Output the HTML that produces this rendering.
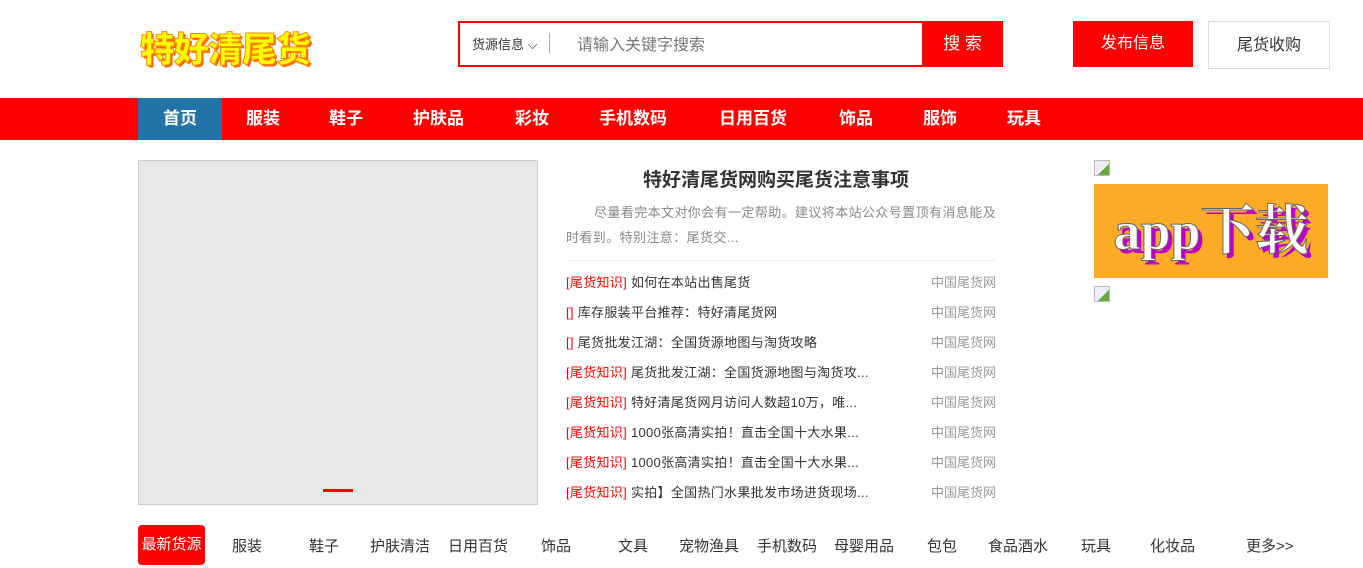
<!DOCTYPE html>
<html><head><meta charset="utf-8"><style>
*{margin:0;padding:0;box-sizing:border-box}
body{width:1363px;height:568px;overflow:hidden;background:#fff;font-family:"Liberation Sans","Noto Sans CJK SC",sans-serif;font-size:14px;color:#333;position:relative}
.a{position:absolute}
.logo{left:140px;top:22px;font-size:35px;font-weight:900;color:#ff0;-webkit-text-stroke:1px #f80;text-shadow:2px 2px 0 #f60;letter-spacing:-1px}
.search{left:458px;top:21px;width:545px;height:46px;border:2px solid #f00}
.nav{left:0;top:98px;width:1363px;height:42px;background:#f00}
.nav span{position:absolute;top:0;height:42px;line-height:42px;color:#fff;font-weight:bold;font-size:17px}
.list div{position:absolute;left:566px;width:430px;font-size:13px;color:#333;letter-spacing:0.3px}
.list b{font-weight:normal;color:#f00}
.list i{font-style:normal;position:absolute;right:0;color:#999;letter-spacing:0}
.cat span{position:absolute;top:535px;font-size:15px;color:#333}
</style></head><body>
<div class="a logo">特好清尾货</div>
<div class="a search">
<span class="a" style="left:12px;top:11px;font-size:13px">货源信息 ⌵</span>
<span class="a" style="left:89px;top:10px;width:1px;height:20px;background:#aaa"></span>
<span class="a" style="left:117px;top:8px;font-size:16px;color:#777">请输入关键字搜索</span>
<span class="a" style="left:462px;top:-2px;width:81px;height:46px;background:#f00;color:#fff;font-size:17px;line-height:46px;text-align:center">搜 索</span>
</div>
<div class="a" style="left:1073px;top:21px;width:120px;height:46px;background:#f00;color:#fff;font-size:16px;line-height:46px;text-align:center">发布信息</div>
<div class="a" style="left:1208px;top:21px;width:122px;height:48px;border:1px solid #ddd;font-size:16px;line-height:48px;text-align:center">尾货收购</div>
<div class="a nav">
<span style="left:138px;width:84px;background:#2173a8;text-align:center">首页</span>
<span style="left:246px">服装</span><span style="left:329px">鞋子</span><span style="left:413px">护肤品</span><span style="left:515px">彩妆</span><span style="left:599px">手机数码</span><span style="left:719px">日用百货</span><span style="left:839px">饰品</span><span style="left:923px">服饰</span><span style="left:1007px">玩具</span>
</div>
<div class="a" style="left:138px;top:160px;width:400px;height:345px;background:#e8e8e8;border:1px solid #ccc"></div>
<div class="a" style="left:323px;top:489px;width:30px;height:3px;background:#f00"></div>
<div class="a" style="left:566px;top:165px;width:430px;text-align:center;font-size:19px;font-weight:bold;padding-right:10px">特好清尾货网购买尾货注意事项</div>
<div class="a" style="left:566px;top:200px;width:430px;font-size:13px;color:#888;line-height:25px;text-indent:28px;letter-spacing:0.4px">尽量看完本文对你会有一定帮助。建议将本站公众号置顶有消息能及时看到。特别注意：尾货交...</div>
<div class="a" style="left:566px;top:260px;width:430px;height:1px;background:#eee"></div>
<div class="list">
<div style="top:272px"><b>[尾货知识]</b> 如何在本站出售尾货<i>中国尾货网</i></div>
<div style="top:302px"><b>[]</b> 库存服装平台推荐：特好清尾货网<i>中国尾货网</i></div>
<div style="top:332px"><b>[]</b> 尾货批发江湖：全国货源地图与淘货攻略<i>中国尾货网</i></div>
<div style="top:362px"><b>[尾货知识]</b> 尾货批发江湖：全国货源地图与淘货攻...<i>中国尾货网</i></div>
<div style="top:392px"><b>[尾货知识]</b> 特好清尾货网月访问人数超10万，唯...<i>中国尾货网</i></div>
<div style="top:422px"><b>[尾货知识]</b> 1000张高清实拍！直击全国十大水果...<i>中国尾货网</i></div>
<div style="top:452px"><b>[尾货知识]</b> 1000张高清实拍！直击全国十大水果...<i>中国尾货网</i></div>
<div style="top:482px"><b>[尾货知识]</b> 实拍】全国热门水果批发市场进货现场...<i>中国尾货网</i></div>
</div>
<div class="a" style="left:1094px;top:184px;width:234px;height:94px;background:#fbab25;color:#fff;font-family:'Liberation Serif','Noto Serif CJK SC',serif;font-weight:bold;font-size:54px;line-height:94px;text-align:center;text-shadow:4px 4px 0 #b0c;-webkit-text-stroke:1px #666">app下载</div>
<div class="a" style="left:1094px;top:160px;width:16px;height:16px;border:1px solid #bbb;background:linear-gradient(135deg,#eef 60%,#6a4 60%)"></div>
<div class="a" style="left:1094px;top:286px;width:16px;height:16px;border:1px solid #bbb;background:linear-gradient(135deg,#eef 60%,#6a4 60%)"></div>
<div class="a" style="left:138px;top:525px;width:67px;height:40px;background:#f00;border-radius:4px;color:#fff;font-size:15px;line-height:40px;text-align:center">最新货源</div>
<div class="cat">
<span style="left:232px">服装</span><span style="left:309px">鞋子</span><span style="left:370px">护肤清洁</span><span style="left:448px">日用百货</span><span style="left:541px">饰品</span><span style="left:618px">文具</span><span style="left:679px">宠物渔具</span><span style="left:757px">手机数码</span><span style="left:834px">母婴用品</span><span style="left:927px">包包</span><span style="left:988px">食品酒水</span><span style="left:1081px">玩具</span><span style="left:1150px">化妆品</span><span style="left:1246px">更多&gt;&gt;</span>
</div>
</body></html>
